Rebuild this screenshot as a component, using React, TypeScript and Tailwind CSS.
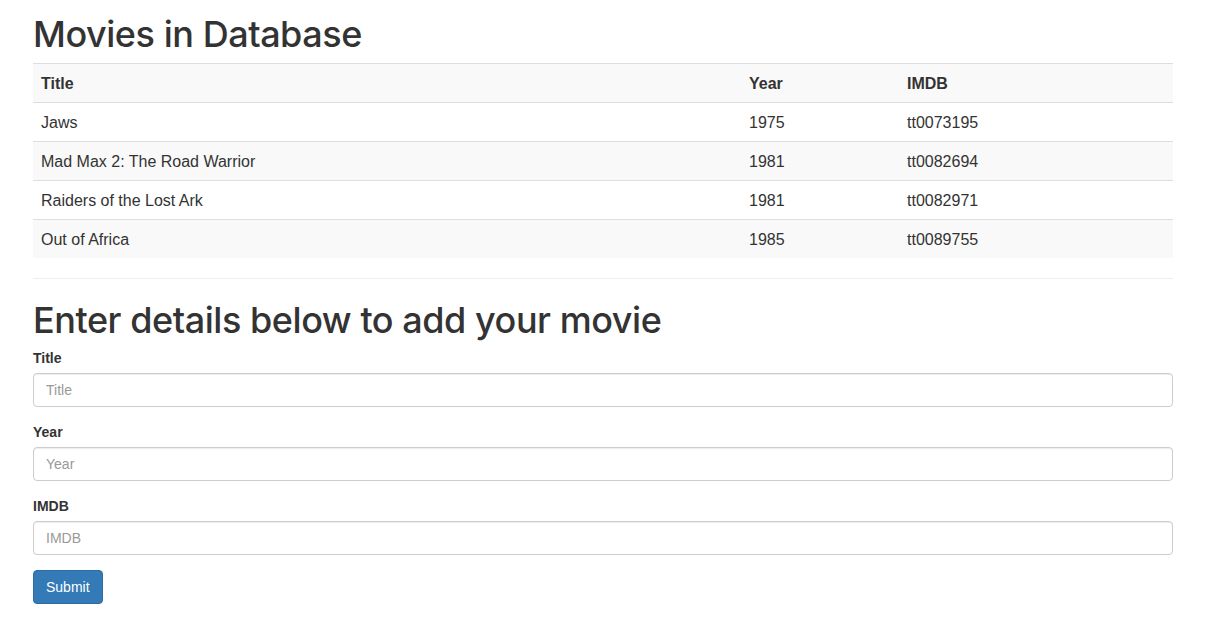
const movies = [
  { title: "Jaws", year: "1975", imdb: "tt0073195" },
  { title: "Mad Max 2: The Road Warrior", year: "1981", imdb: "tt0082694" },
  { title: "Raiders of the Lost Ark", year: "1981", imdb: "tt0082971" },
  { title: "Out of Africa", year: "1985", imdb: "tt0089755" },
];

const fields = ["Title", "Year", "IMDB"];

export default function App() {
  return (
    <div className="min-h-[624px] bg-white text-[#333] text-[14px] font-['Liberation_Sans',Arial,sans-serif]">
      <div className="w-[1140px] ml-[33px]">
        <h1 className="pt-[15px] mb-[8px] text-[36px] leading-[39.6px] font-medium font-['Inter','Liberation_Sans',sans-serif] tracking-[-0.45px]">
          Movies in Database
        </h1>
        <table className="w-full border-collapse text-[16px]">
          <thead>
            <tr className="bg-[#f9f9f9]">
              <th className="w-[708px] text-left font-bold px-2 pt-[9px] pb-[7px] leading-[22px] border-t border-[#ddd]">Title</th>
              <th className="w-[158px] text-left font-bold px-2 pt-[9px] pb-[7px] leading-[22px] border-t border-[#ddd]">Year</th>
              <th className="text-left font-bold px-2 pt-[9px] pb-[7px] leading-[22px] border-t border-[#ddd]">IMDB</th>
            </tr>
          </thead>
          <tbody>
            {movies.map((m, i) => (
              <tr key={m.imdb} className={i % 2 === 1 ? "bg-[#f9f9f9]" : "bg-white"}>
                <td className="px-2 pt-[9px] pb-[7px] leading-[22px] border-t border-[#ddd]">{m.title}</td>
                <td className="px-2 pt-[9px] pb-[7px] leading-[22px] border-t border-[#ddd]">{m.year}</td>
                <td className="px-2 pt-[9px] pb-[7px] leading-[22px] border-t border-[#ddd]">{m.imdb}</td>
              </tr>
            ))}
          </tbody>
        </table>
        <hr className="mt-[20px] border-0 border-t border-[#eee]" />
        <h1 className="mt-[22px] mb-[8px] text-[36px] leading-[39.6px] font-medium font-['Inter','Liberation_Sans',sans-serif] tracking-[-0.45px]">
          Enter details below to add your movie
        </h1>
        <form onSubmit={(e) => e.preventDefault()}>
          {fields.map((f) => (
            <div key={f} className="mb-[15px]">
              <label className="block mb-[5px] font-bold leading-[20px]">{f}</label>
              <input
                type="text"
                placeholder={f}
                className="block w-full h-[34px] px-3 py-[6px] text-[14px] text-[#555] border border-[#ccc] rounded-[4px] shadow-[inset_0_1px_1px_rgba(0,0,0,0.075)] placeholder:text-[#999] outline-none"
              />
            </div>
          ))}
          <button
            type="submit"
            className="h-[34px] px-3 text-[14px] text-white bg-[#337ab7] border border-[#2e6da4] rounded-[4px]"
          >
            Submit
          </button>
        </form>
      </div>
    </div>
  );
}
